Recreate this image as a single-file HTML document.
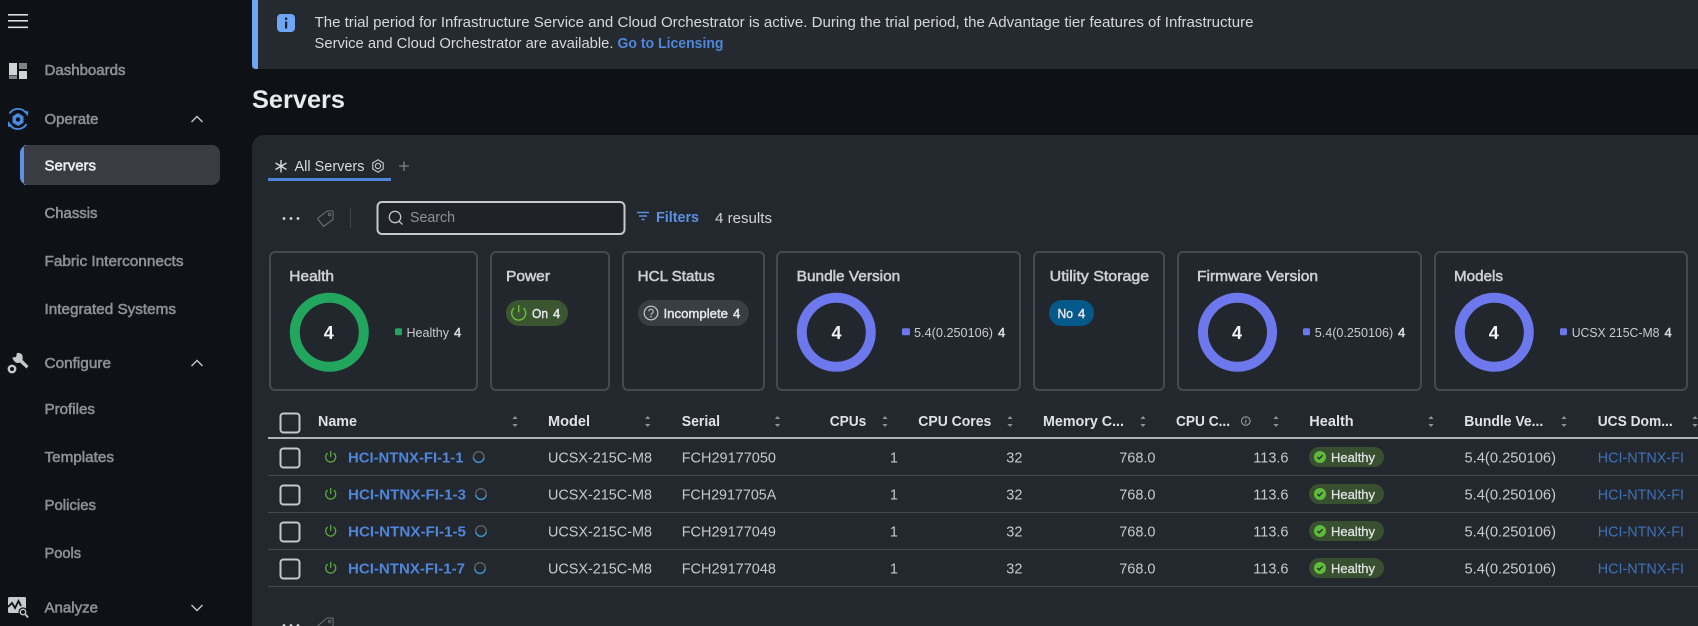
<!DOCTYPE html>
<html lang="en"><head><meta charset="utf-8"><title>Servers</title>
<style>
html,body{margin:0;padding:0;width:1698px;height:626px;overflow:hidden;background:#0e1216}
svg{display:block}
text{font-family:"Liberation Sans",sans-serif;white-space:pre}
.nav{font-size:15px;fill:#8d9096;stroke:#8d9096;stroke-width:.55}
.ban{font-size:14.5px;fill:#d6d8dc}
.ct{font-size:15px;fill:#cdd0d4;stroke:#cdd0d4;stroke-width:.55}
.dn{font-size:18px;font-weight:bold;fill:#f3f4f5}
.lg{font-size:13px;fill:#c9ccd0}
.lv{font-size:13px;fill:#d9dbde;stroke:#d9dbde;stroke-width:.5}
.pl{font-size:13px;fill:#e4e6e8;stroke:#e4e6e8;stroke-width:.45}
.th{font-size:14.5px;font-weight:bold;fill:#e0e2e5}
.td{font-size:14.5px;fill:#c6c9cd}
.nm{font-size:14.5px;font-weight:bold;fill:#4f86d9}
.lk{font-size:14.5px;fill:#3f72b8}
.hp{font-size:13px;fill:#dfe2e4;stroke:#dfe2e4;stroke-width:.3}
.cb{fill:none;stroke:#c4c7cb;stroke-width:2}
.ln{stroke:#454950;stroke-width:1}
.card{fill:#22262d;stroke:#454950;stroke-width:2}
.srt{fill:#8f9297}
</style></head><body>
<svg width="1698" height="626" viewBox="0 0 1698 626" xmlns="http://www.w3.org/2000/svg">
<defs>
<g id="sort"><path class="srt" d="M-2.6 -2 L0 -5 L2.6 -2Z M-2.6 3 L0 6 L2.6 3Z"/></g>
<g id="pw"><path d="M-3.4 -3.6A5 5 0 1 0 3.4 -3.6M0 -5.6V-0.5" fill="none" stroke="#5aa83a" stroke-width="1.3" stroke-linecap="round"/></g>
<g id="spin"><circle r="5.3" fill="none" stroke="#5c6168" stroke-width="1.4"/><path d="M-5.3 1A5.4 5.4 0 0 0 5.3 1" fill="none" stroke="#3b8fc2" stroke-width="1.5"/></g>
<g id="box"><rect x="-9.5" y="-9.5" width="19" height="19" rx="3" class="cb"/></g>
<g id="ok"><rect x="-11" y="-10" width="75" height="20" rx="10" fill="#38502f"/><circle cx="0" cy="0" r="6" fill="#5fbb3c"/><path d="M-2.6 0L-.8 1.9L2.6 -1.8" fill="none" stroke="#24301f" stroke-width="1.4"/></g>
</defs>

<rect width="1698" height="626" fill="#0e1216"/>

<!-- sidebar -->
<rect x="8" y="14" width="20" height="1.6" fill="#dcdee0"/><rect x="8" y="20" width="20" height="1.6" fill="#dcdee0"/><rect x="8" y="26.5" width="20" height="1.6" fill="#dcdee0"/>
<rect x="9" y="63" width="8" height="12" fill="#d2d3d4"/><rect x="9" y="75.5" width="8" height="3.5" fill="#808286"/>
<rect x="19" y="63" width="8" height="6" fill="#808286"/><rect x="19" y="71" width="8" height="8" rx=".5" fill="#d2d3d4"/>
<text class="nav" x="44.5" y="75" textLength="81" lengthAdjust="spacingAndGlyphs">Dashboards</text>

<g fill="none" stroke="#4a8be0" stroke-width="1.8">
<path d="M9.5 113.5A10 10 0 0 1 26 113"/><path d="M9.5 124.5A10 10 0 0 0 26.5 124"/>
</g>
<path d="M24 110.5L28.5 111.5L27.5 116.5ZM8 121L8 127L12.5 126Z" fill="#4a8be0"/>
<path d="M18 113L23.5 116.2V122.8L18 126L12.5 122.8V116.2Z" fill="#4a8be0"/>
<circle cx="18" cy="119.5" r="2.2" fill="#0e1216"/>
<text class="nav" x="44.5" y="124" textLength="54" lengthAdjust="spacingAndGlyphs">Operate</text>
<path d="M191.5 122L197 116.5L202.5 122" fill="none" stroke="#c5c7ca" stroke-width="1.4"/>

<rect x="20" y="145" width="200" height="40" rx="8" fill="#393c43"/>
<path d="M28 145A8 8 0 0 0 20 153V177A8 8 0 0 0 28 185H24V145Z" fill="#5b92e6"/>
<text x="44.5" y="170.5" font-size="15" fill="#eceef0" stroke="#eceef0" stroke-width=".55" textLength="51.5" lengthAdjust="spacingAndGlyphs">Servers</text>
<text class="nav" x="44.5" y="218" textLength="53" lengthAdjust="spacingAndGlyphs">Chassis</text>
<text class="nav" x="44.5" y="266" textLength="139" lengthAdjust="spacingAndGlyphs">Fabric Interconnects</text>
<text class="nav" x="44.5" y="314" textLength="131.5" lengthAdjust="spacingAndGlyphs">Integrated Systems</text>

<path d="M12.3 357.5L16 357L17 353C20 352.6 22.8 354 22.7 357.4L22.5 360L28.5 366L26.5 368.5L20 362.5C17 363.8 14 362.5 12.3 357.5Z" fill="#c6c8ca"/>
<circle cx="12" cy="369" r="3.2" fill="none" stroke="#c6c8ca" stroke-width="2.4"/>
<text class="nav" x="44.5" y="368" textLength="66.5" lengthAdjust="spacingAndGlyphs">Configure</text>
<path d="M191.5 366L197 360.5L202.5 366" fill="none" stroke="#c5c7ca" stroke-width="1.4"/>
<text class="nav" x="44.5" y="414" textLength="50.5" lengthAdjust="spacingAndGlyphs">Profiles</text>
<text class="nav" x="44.5" y="462" textLength="69.5" lengthAdjust="spacingAndGlyphs">Templates</text>
<text class="nav" x="44.5" y="510" textLength="51.5" lengthAdjust="spacingAndGlyphs">Policies</text>
<text class="nav" x="44.5" y="558" textLength="36.5" lengthAdjust="spacingAndGlyphs">Pools</text>

<rect x="8" y="597" width="18" height="16" rx="1.5" fill="#c9cbcd"/>
<path d="M8 607L12 603L15 608L18.5 601L21 606" fill="none" stroke="#0e1216" stroke-width="1.8"/>
<circle cx="23" cy="612" r="4" fill="#c9cbcd" stroke="#0e1216" stroke-width="1.2"/>
<circle cx="23" cy="612" r="2" fill="#0e1216"/>
<path d="M25.5 614.5L28 617.5" stroke="#c9cbcd" stroke-width="1.8"/>
<text class="nav" x="44.5" y="612.5" textLength="53.5" lengthAdjust="spacingAndGlyphs">Analyze</text>
<path d="M191.5 605L197 610.5L202.5 605" fill="none" stroke="#c5c7ca" stroke-width="1.4"/>

<!-- banner -->
<rect x="252" y="0" width="1446" height="69" fill="#252a31"/>
<path d="M252 0H258V69H256A4 4 0 0 1 252 65Z" fill="#6fa6f4"/>
<rect x="277" y="14" width="18" height="18" rx="4" fill="#6fa6f4"/>
<rect x="285" y="17.5" width="2.2" height="2.4" fill="#1b2128"/><rect x="285" y="21.5" width="2.2" height="7" fill="#1b2128"/>
<text class="ban" x="314.5" y="27" textLength="939" lengthAdjust="spacingAndGlyphs">The trial period for Infrastructure Service and Cloud Orchestrator is active. During the trial period, the Advantage tier features of Infrastructure</text>
<text class="ban" x="314.5" y="48" textLength="299" lengthAdjust="spacingAndGlyphs">Service and Cloud Orchestrator are available.</text>
<text x="617.5" y="48" font-size="14.5" font-weight="bold" fill="#4f86d9" textLength="106" lengthAdjust="spacingAndGlyphs">Go to Licensing</text>

<text x="252" y="108" font-size="25" font-weight="bold" fill="#e8eaec" textLength="93" lengthAdjust="spacingAndGlyphs">Servers</text>

<!-- main card -->
<path d="M1698 135H264A12 12 0 0 0 252 147V626H1698Z" fill="#23272e"/>

<!-- tabs -->
<path d="M281 160V172.5M275.5 163L286.5 169.5M286.5 163L275.5 169.5" stroke="#d8dadd" stroke-width="1.4"/>
<text x="294.5" y="171" font-size="14.5" fill="#d9dbde" textLength="70" lengthAdjust="spacingAndGlyphs">All Servers</text>
<path d="M378 159.8L383.2 163V169L378 172.2L372.8 169V163Z" fill="none" stroke="#c0c3c7" stroke-width="1.2"/><circle cx="378" cy="166" r="2.6" fill="none" stroke="#c0c3c7" stroke-width="1.2"/>
<path d="M404 161.5V171M399.2 166H408.8" stroke="#7f8389" stroke-width="1.3"/>
<rect x="268" y="178" width="123" height="3" fill="#4d84d8"/>

<!-- toolbar -->
<circle cx="284" cy="218.5" r="1.4" fill="#d9dbde"/><circle cx="291" cy="218.5" r="1.4" fill="#d9dbde"/><circle cx="298" cy="218.5" r="1.4" fill="#d9dbde"/>
<path d="M317.5 218.5L327 211H333V219.5L323.5 226.5Z" fill="none" stroke="#6a6e74" stroke-width="1.1" stroke-linejoin="round"/><circle cx="329.5" cy="214.5" r="1.2" fill="none" stroke="#6a6e74"/>
<path d="M350.5 208V228" stroke="#3f444b" stroke-width="1"/>
<rect x="377.5" y="202" width="247" height="32" rx="4.5" fill="#1f2328" stroke="#c6c9cd" stroke-width="2"/>
<circle cx="395" cy="217" r="5.7" fill="none" stroke="#c0c3c7" stroke-width="1.3"/><path d="M399 221.2L402.5 224.5" stroke="#c0c3c7" stroke-width="1.3"/>
<text x="410" y="222" font-size="14.5" fill="#8f9297" textLength="45" lengthAdjust="spacingAndGlyphs">Search</text>
<path d="M637 212.5H649M639 216H647M641.5 219.5H644.5" stroke="#5a91e0" stroke-width="1.4"/>
<text x="656" y="222" font-size="14.5" font-weight="bold" fill="#5a91e0" textLength="43" lengthAdjust="spacingAndGlyphs">Filters</text>
<text x="715" y="223" font-size="14.5" fill="#d1d3d6" textLength="57" lengthAdjust="spacingAndGlyphs">4 results</text>

<!-- summary cards -->
<rect class="card" x="270" y="252" width="207" height="138" rx="5"/>
<rect class="card" x="491" y="252" width="118" height="138" rx="5"/>
<rect class="card" x="623" y="252" width="141" height="138" rx="5"/>
<rect class="card" x="777" y="252" width="243" height="138" rx="5"/>
<rect class="card" x="1034" y="252" width="130" height="138" rx="5"/>
<rect class="card" x="1178" y="252" width="243" height="138" rx="5"/>
<rect class="card" x="1435" y="252" width="252" height="138" rx="5"/>

<text class="ct" x="289.3" y="281" textLength="44.7" lengthAdjust="spacingAndGlyphs">Health</text>
<text class="ct" x="506" y="281" textLength="44" lengthAdjust="spacingAndGlyphs">Power</text>
<text class="ct" x="637.7" y="281" textLength="77" lengthAdjust="spacingAndGlyphs">HCL Status</text>
<text class="ct" x="796.7" y="281" textLength="103.5" lengthAdjust="spacingAndGlyphs">Bundle Version</text>
<text class="ct" x="1049.7" y="281" textLength="99.5" lengthAdjust="spacingAndGlyphs">Utility Storage</text>
<text class="ct" x="1197" y="281" textLength="121" lengthAdjust="spacingAndGlyphs">Firmware Version</text>
<text class="ct" x="1454" y="281" textLength="49" lengthAdjust="spacingAndGlyphs">Models</text>

<circle cx="329.3" cy="332.3" r="34.5" fill="none" stroke="#22a65e" stroke-width="10"/>
<text class="dn" x="328.8" y="339" text-anchor="middle">4</text>
<rect x="395" y="328.2" width="7" height="7" rx="1.5" fill="#22a65e"/>
<text class="lg" x="406.5" y="337" textLength="42.5" lengthAdjust="spacingAndGlyphs">Healthy</text>
<text class="lv" x="454" y="337">4</text>

<rect x="506" y="300" width="62" height="26" rx="13" fill="#3b5530"/>
<g transform="translate(518.7,313) scale(1.4)"><path d="M-3.4 -3.6A5 5 0 1 0 3.4 -3.6M0 -5.6V-0.5" fill="none" stroke="#6cbf3e" stroke-width="1"/></g>
<text class="pl" x="532" y="318" textLength="16" lengthAdjust="spacingAndGlyphs">On</text>
<text class="pl" x="553" y="318">4</text>

<rect x="638" y="300" width="111" height="26" rx="13" fill="#393d44"/>
<circle cx="651" cy="313" r="6.8" fill="none" stroke="#c4c7cb" stroke-width="1.2"/>
<path d="M648.8 311.3A2.2 2.2 0 1 1 652.2 313.2C651.3 313.7 651 314.2 651 315" fill="none" stroke="#c4c7cb" stroke-width="1.1"/><circle cx="651" cy="316.8" r=".8" fill="#c4c7cb"/>
<text class="pl" x="663.5" y="318" textLength="64.5" lengthAdjust="spacingAndGlyphs">Incomplete</text>
<text class="pl" x="733" y="318">4</text>

<circle cx="836.3" cy="332.3" r="34.5" fill="none" stroke="#6c78ec" stroke-width="10"/>
<text class="dn" x="836.5" y="339" text-anchor="middle">4</text>
<rect x="902" y="328.2" width="8" height="7" rx="1.5" fill="#6c78ec"/>
<text class="lg" x="914" y="337" textLength="79" lengthAdjust="spacingAndGlyphs">5.4(0.250106)</text>
<text class="lv" x="998" y="337">4</text>

<rect x="1049" y="300" width="45" height="26" rx="13" fill="#03598a"/>
<text class="pl" x="1057.5" y="318" textLength="15.5" lengthAdjust="spacingAndGlyphs">No</text>
<text class="pl" x="1078" y="318">4</text>

<circle cx="1237.5" cy="332.3" r="34.5" fill="none" stroke="#6c78ec" stroke-width="10"/>
<text class="dn" x="1237" y="339" text-anchor="middle">4</text>
<rect x="1303" y="328.2" width="7" height="7" rx="1.5" fill="#6c78ec"/>
<text class="lg" x="1314.7" y="337" textLength="78.5" lengthAdjust="spacingAndGlyphs">5.4(0.250106)</text>
<text class="lv" x="1398" y="337">4</text>

<circle cx="1494.3" cy="332.3" r="34.5" fill="none" stroke="#6c78ec" stroke-width="10"/>
<text class="dn" x="1493.7" y="339" text-anchor="middle">4</text>
<rect x="1560" y="328.2" width="7" height="7" rx="1.5" fill="#6c78ec"/>
<text class="lg" x="1571.7" y="337" textLength="87.8" lengthAdjust="spacingAndGlyphs">UCSX 215C-M8</text>
<text class="lv" x="1664.5" y="337">4</text>

<!-- table header -->
<use href="#box" x="290" y="423"/>
<text class="th" x="318" y="426" textLength="39" lengthAdjust="spacingAndGlyphs">Name</text><use href="#sort" x="515" y="421"/>
<text class="th" x="548" y="426" textLength="42" lengthAdjust="spacingAndGlyphs">Model</text><use href="#sort" x="647.7" y="421"/>
<text class="th" x="681.7" y="426" textLength="38.3" lengthAdjust="spacingAndGlyphs">Serial</text><use href="#sort" x="777.5" y="421"/>
<text class="th" x="829.7" y="426" textLength="36.6" lengthAdjust="spacingAndGlyphs">CPUs</text><use href="#sort" x="885" y="421"/>
<text class="th" x="918.3" y="426" textLength="73" lengthAdjust="spacingAndGlyphs">CPU Cores</text><use href="#sort" x="1010" y="421"/>
<text class="th" x="1043" y="426" textLength="81" lengthAdjust="spacingAndGlyphs">Memory C...</text><use href="#sort" x="1143" y="421"/>
<text class="th" x="1176" y="426" textLength="54" lengthAdjust="spacingAndGlyphs">CPU C...</text>
<circle cx="1245.8" cy="421" r="4.3" fill="none" stroke="#a0a3a8" stroke-width="1"/><path d="M1245.8 420V423.5M1245.8 418.2V419" stroke="#a0a3a8" stroke-width="1"/><use href="#sort" x="1276" y="421"/>
<text class="th" x="1309.3" y="426" textLength="44.4" lengthAdjust="spacingAndGlyphs">Health</text><use href="#sort" x="1431" y="421"/>
<text class="th" x="1464.3" y="426" textLength="79" lengthAdjust="spacingAndGlyphs">Bundle Ve...</text><use href="#sort" x="1564" y="421"/>
<text class="th" x="1597.7" y="426" textLength="75" lengthAdjust="spacingAndGlyphs">UCS Dom...</text><use href="#sort" x="1695" y="421"/>
<rect x="268" y="437" width="1430" height="2" fill="#b0b3b8"/>

<!-- rows -->
<path class="ln" d="M268 475.5H1698M268 512.5H1698M268 549.5H1698M268 586.5H1698"/>

<use href="#box" x="290" y="458"/><use href="#pw" x="330.7" y="457"/>
<text class="nm" x="348" y="462.3" textLength="115.5" lengthAdjust="spacingAndGlyphs">HCI-NTNX-FI-1-1</text><use href="#spin" x="478.7" y="457"/>
<text class="td" x="548" y="462.3" textLength="104" lengthAdjust="spacingAndGlyphs">UCSX-215C-M8</text>
<text class="td" x="681.7" y="462.3" textLength="94.3" lengthAdjust="spacingAndGlyphs">FCH29177050</text>
<text class="td" x="898" y="462.3" text-anchor="end">1</text>
<text class="td" x="1022.4" y="462.3" text-anchor="end">32</text>
<text class="td" x="1155.5" y="462.3" text-anchor="end">768.0</text>
<text class="td" x="1288.5" y="462.3" text-anchor="end">113.6</text>
<use href="#ok" x="1320" y="457"/><text class="hp" x="1331" y="462" textLength="44" lengthAdjust="spacingAndGlyphs">Healthy</text>
<text class="td" x="1464.5" y="462.3" textLength="91.5" lengthAdjust="spacingAndGlyphs">5.4(0.250106)</text>
<text class="lk" x="1597.7" y="462.3" textLength="86.3" lengthAdjust="spacingAndGlyphs">HCI-NTNX-FI</text>

<use href="#box" x="290" y="495"/><use href="#pw" x="330.7" y="494"/>
<text class="nm" x="348" y="499.3" textLength="118" lengthAdjust="spacingAndGlyphs">HCI-NTNX-FI-1-3</text><use href="#spin" x="481" y="494"/>
<text class="td" x="548" y="499.3" textLength="104" lengthAdjust="spacingAndGlyphs">UCSX-215C-M8</text>
<text class="td" x="681.7" y="499.3" textLength="94.6" lengthAdjust="spacingAndGlyphs">FCH2917705A</text>
<text class="td" x="898" y="499.3" text-anchor="end">1</text>
<text class="td" x="1022.4" y="499.3" text-anchor="end">32</text>
<text class="td" x="1155.5" y="499.3" text-anchor="end">768.0</text>
<text class="td" x="1288.5" y="499.3" text-anchor="end">113.6</text>
<use href="#ok" x="1320" y="494"/><text class="hp" x="1331" y="499" textLength="44" lengthAdjust="spacingAndGlyphs">Healthy</text>
<text class="td" x="1464.5" y="499.3" textLength="91.5" lengthAdjust="spacingAndGlyphs">5.4(0.250106)</text>
<text class="lk" x="1597.7" y="499.3" textLength="86.3" lengthAdjust="spacingAndGlyphs">HCI-NTNX-FI</text>

<use href="#box" x="290" y="532"/><use href="#pw" x="330.7" y="531"/>
<text class="nm" x="348" y="536.3" textLength="118" lengthAdjust="spacingAndGlyphs">HCI-NTNX-FI-1-5</text><use href="#spin" x="481" y="531"/>
<text class="td" x="548" y="536.3" textLength="104" lengthAdjust="spacingAndGlyphs">UCSX-215C-M8</text>
<text class="td" x="681.7" y="536.3" textLength="94.3" lengthAdjust="spacingAndGlyphs">FCH29177049</text>
<text class="td" x="898" y="536.3" text-anchor="end">1</text>
<text class="td" x="1022.4" y="536.3" text-anchor="end">32</text>
<text class="td" x="1155.5" y="536.3" text-anchor="end">768.0</text>
<text class="td" x="1288.5" y="536.3" text-anchor="end">113.6</text>
<use href="#ok" x="1320" y="531"/><text class="hp" x="1331" y="536" textLength="44" lengthAdjust="spacingAndGlyphs">Healthy</text>
<text class="td" x="1464.5" y="536.3" textLength="91.5" lengthAdjust="spacingAndGlyphs">5.4(0.250106)</text>
<text class="lk" x="1597.7" y="536.3" textLength="86.3" lengthAdjust="spacingAndGlyphs">HCI-NTNX-FI</text>

<use href="#box" x="290" y="569"/><use href="#pw" x="330.7" y="568"/>
<text class="nm" x="348" y="573.3" textLength="117" lengthAdjust="spacingAndGlyphs">HCI-NTNX-FI-1-7</text><use href="#spin" x="480" y="568"/>
<text class="td" x="548" y="573.3" textLength="104" lengthAdjust="spacingAndGlyphs">UCSX-215C-M8</text>
<text class="td" x="681.7" y="573.3" textLength="94.3" lengthAdjust="spacingAndGlyphs">FCH29177048</text>
<text class="td" x="898" y="573.3" text-anchor="end">1</text>
<text class="td" x="1022.4" y="573.3" text-anchor="end">32</text>
<text class="td" x="1155.5" y="573.3" text-anchor="end">768.0</text>
<text class="td" x="1288.5" y="573.3" text-anchor="end">113.6</text>
<use href="#ok" x="1320" y="568"/><text class="hp" x="1331" y="573" textLength="44" lengthAdjust="spacingAndGlyphs">Healthy</text>
<text class="td" x="1464.5" y="573.3" textLength="91.5" lengthAdjust="spacingAndGlyphs">5.4(0.250106)</text>
<text class="lk" x="1597.7" y="573.3" textLength="86.3" lengthAdjust="spacingAndGlyphs">HCI-NTNX-FI</text>

<!-- bottom toolbar -->
<circle cx="284" cy="625.5" r="1.4" fill="#d9dbde"/><circle cx="291" cy="625.5" r="1.4" fill="#d9dbde"/><circle cx="298" cy="625.5" r="1.4" fill="#d9dbde"/>
<path d="M317.5 626L327 618H333V627" fill="none" stroke="#6a6e74" stroke-width="1.1" stroke-linejoin="round"/><circle cx="329.5" cy="621.5" r="1.2" fill="none" stroke="#6a6e74"/>
</svg>
</body></html>
